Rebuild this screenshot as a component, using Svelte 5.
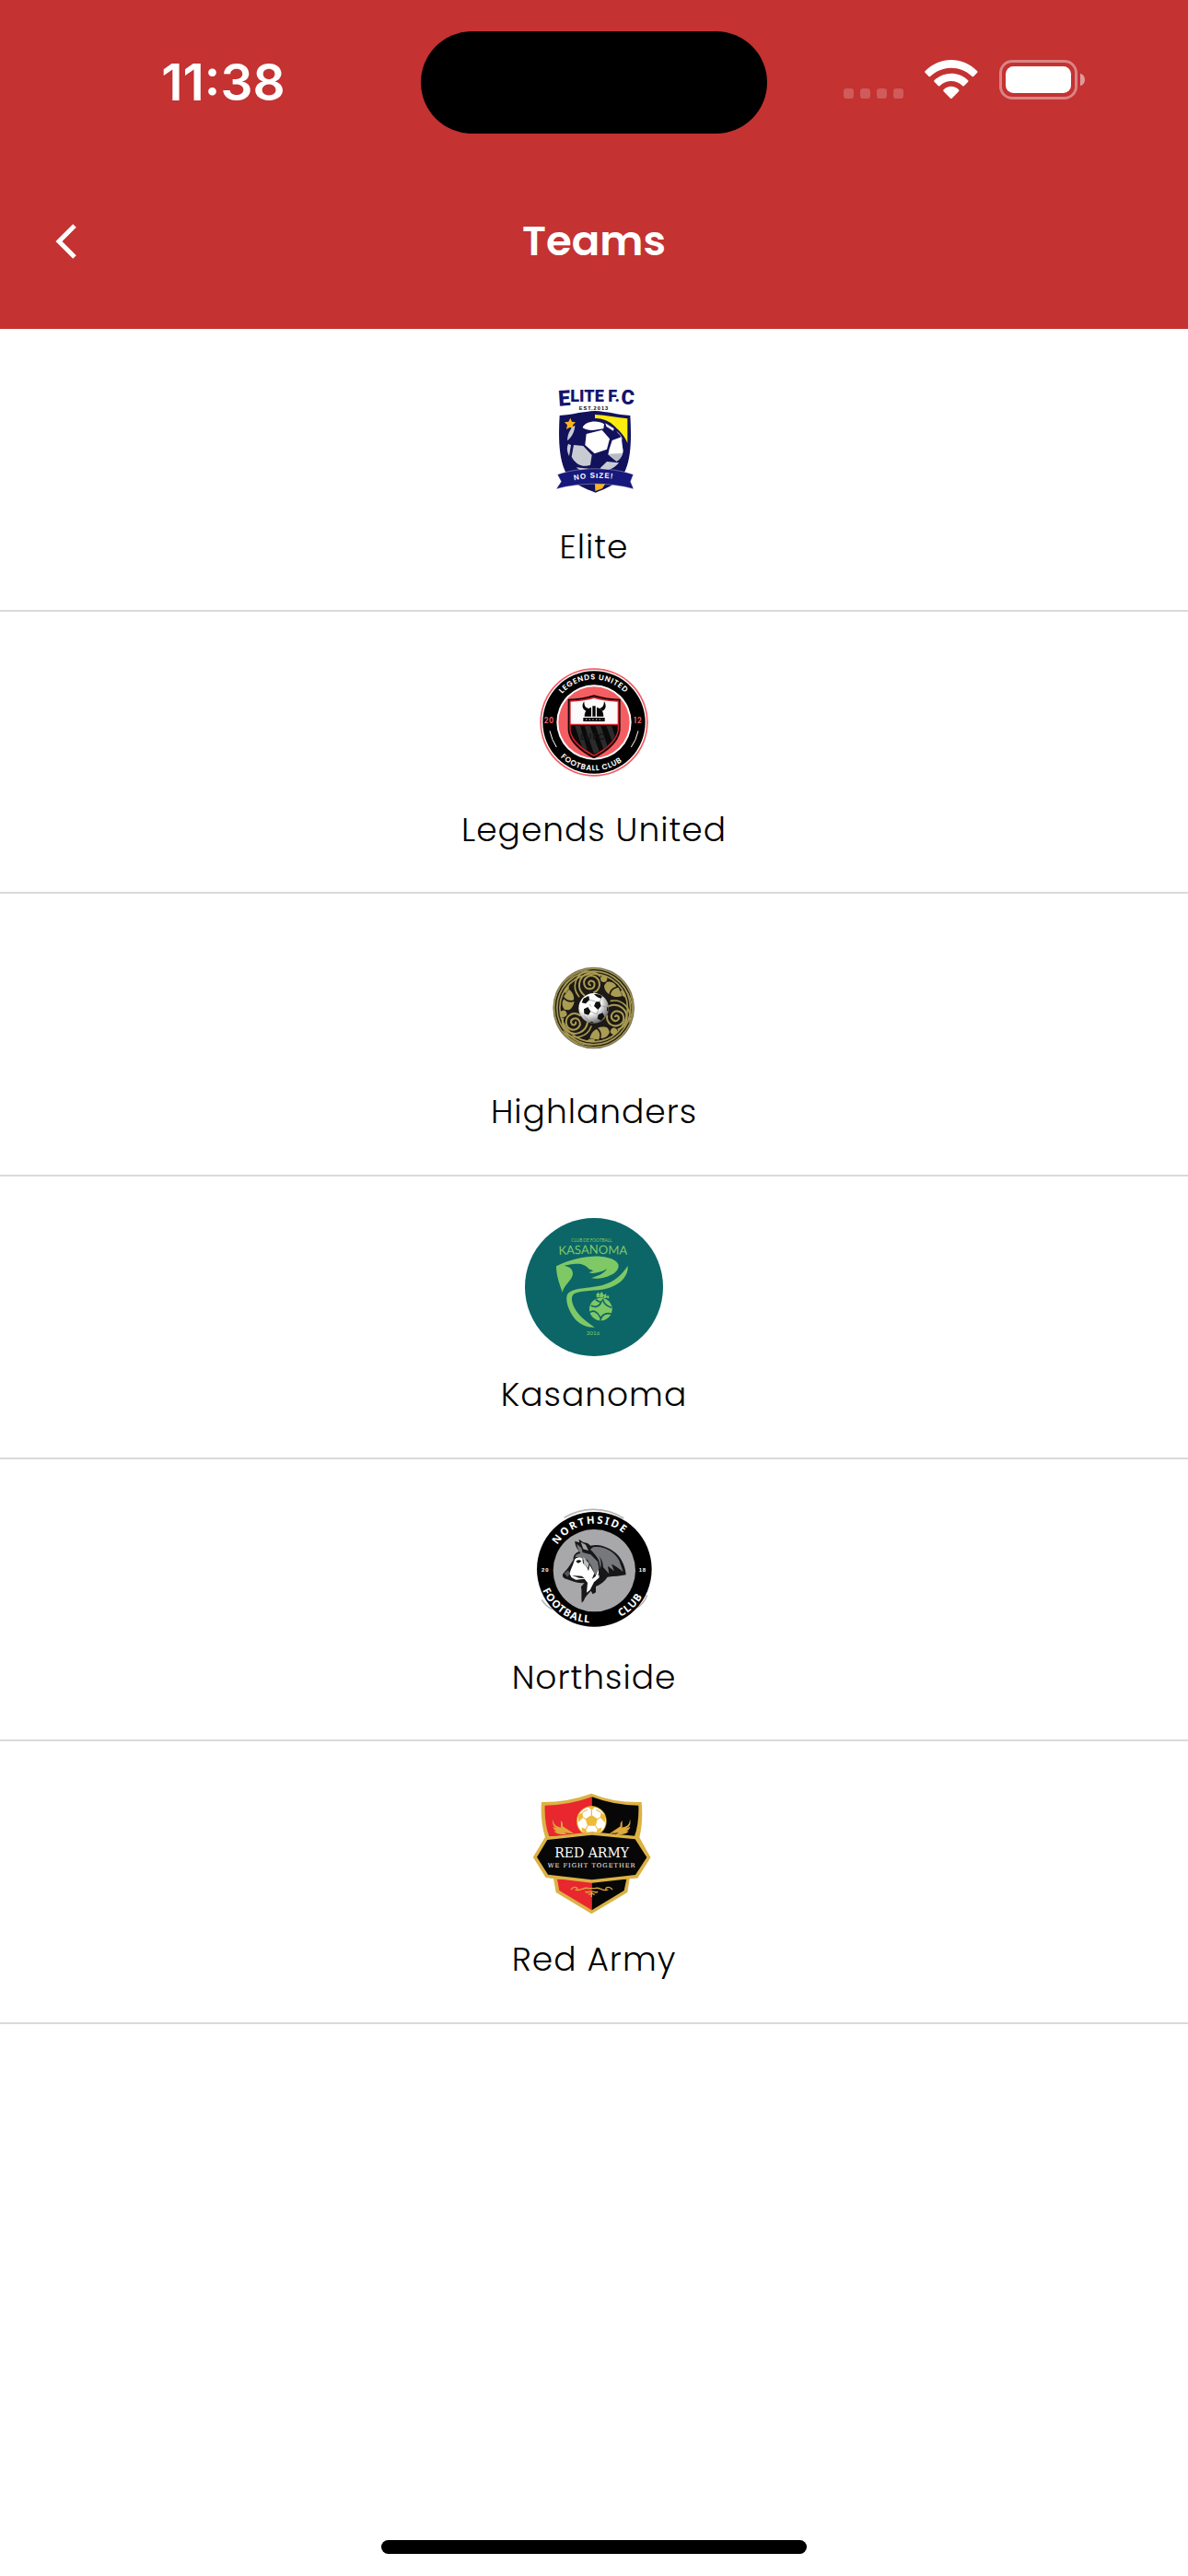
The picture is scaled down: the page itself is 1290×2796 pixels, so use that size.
<script lang="ts">
  const goBack = () => history.back();
</script>

{#snippet eliteCrest()}
  <svg class="crest" viewBox="-30 6 450 450" aria-hidden="true">
    <g class="condensed" fill="#14146e">
      <text x="80" y="122" font-size="70" transform="rotate(-4 80 122)">E</text>
      <text x="118" y="108" font-size="54">LITE F.</text>
      <text x="282" y="115" font-size="66" transform="rotate(4 282 115)">C</text>
    </g>
    <text class="bold" x="146" y="134" font-size="17" letter-spacing="3">EST.2013</text>
    <path d="M83 153C125 150 160 140 198 138C238 140 270 150 313 153C317 220 318 300 290 345C268 378 232 392 200 404C168 392 130 378 107 345C79 300 79 220 83 153Z" fill="#12125c" />
    <path d="M198 150C235 151 270 160 304 163L304 243C288 200 240 168 198 163Z" fill="#fdec0c" />
    <path d="M118 161l5 12 12 2-9 9 2 14-11-7-12 7 3-14-9-9 13-2z" fill="#fbb51c" />
    <circle cx="199" cy="253" r="91" fill="#12125c" />
    <path d="M158 193C163 172 207 165 228 181L226 196C202 199 180 207 158 193Z" fill="#fff" />
    <path d="M170 213L221 200L246 229L237 263L197 277L166 249Z" fill="#fff" />
    <path d="M108 232C110 209 119 193 133 185C132 205 123 222 109 234Z" fill="#c9cbd3" />
    <path d="M129 249L160 252L188 282L183 314C156 325 132 308 122 287Z" fill="#c9cbd3" />
    <path d="M112 245L120 250L114 285C107 271 105 255 112 245Z" fill="#c9cbd3" />
    <path d="M254 234L284 223L290 270C288 283 280 295 268 302L241 280L245 262Z" fill="#fff" />
    <path d="M241 278L288 276C286 288 279 297 269 302Z" fill="#b8bac4" />
    <path d="M232 178L260 195L258 203L235 189Z M268 205C277 209 286 221 289 235L279 216Z" fill="#e8e9ef" />
    <path d="M216 323L237 303L276 307C263 324 244 332 220 334Z M137 322L176 326L181 338C161 337 147 331 137 322Z" fill="#c9cbd3" />
    <path d="M198 371L236 369L222 391L199 399Z" fill="#fbb51c" />
    <path d="M76 345C151 320 248 320 323 345L314 368L324 392C243 370 155 370 72 392L88 368Z" fill="#17187c" stroke="#fff" stroke-width="1" />
    <path id="elite-motto" d="M131 364Q202 348 290 364" fill="none" />
    <text class="bold" font-size="24" fill="#fff" letter-spacing="3"><textPath href="#elite-motto">NO SIZE!</textPath></text>
  </svg>
{/snippet}

{#snippet legendsCrest()}
  <svg class="crest" viewBox="0 -4 450 450" aria-hidden="true">
    <circle cx="225" cy="221" r="176" fill="#f25c63" />
    <circle cx="225" cy="221" r="171" fill="#fff" />
    <circle cx="225" cy="221" r="167" fill="#000" />
    <circle cx="225" cy="221" r="122" fill="#fff" />
    <circle cx="225" cy="221" r="116" fill="#f45d62" />
    <path d="M140 145C170 145 200 140 225 132C252 140 280 145 311 145V246C307 290 260 322 225 339C190 322 143 290 140 246Z" fill="#120506" />
    <path d="M145 150C174 150 202 145 225 138C250 145 277 150 306 150V245C301 286 257 316 225 332C193 316 148 286 145 245Z" fill="#d91f2d" />
    <path d="M149 154C176 154 203 149 225 143C248 149 275 154 302 154V226H149Z" fill="#fafafa" />
    <path d="M149 230H302V246C297 282 255 311 225 327C195 311 153 282 149 246Z" fill="#090909" />
    <path d="M163 232H180L204 314L187 304Z M194 232H212L242 315L225 324Z M229 232H247L269 300L256 309Z M265 232H282L293 266L284 283Z" fill="#2b2b2b" />
    <text class="poppins" x="181" y="279" font-size="30" fill="#151515" letter-spacing="2">LUFC</text>
    <path d="M190 218V206H260V218Z M194 202C194 184 205 175 216 172V202Z M220 202V168H230V202Z M234 202V172C247 175 256 184 256 202Z M199 184C184 178 186 162 193 153C193 167 197 173 207 176Z M252 184C266 178 265 162 258 153C257 167 253 173 243 176Z" fill="#050505" />
    <path d="M198 212H254" stroke="#fff" stroke-width="3" stroke-dasharray="4 7" />
    <path id="legends-top" d="M121 128A139 139 0 0 1 334 135" fill="none" />
    <path id="legends-bottom" d="M116 334A157 157 0 0 0 338 330" fill="none" />
    <g class="poppins" fill="#fff" font-size="25" letter-spacing="2">
      <text><textPath href="#legends-top">LEGENDS UNITED</textPath></text>
      <text><textPath href="#legends-bottom">FOOTBALL CLUB</textPath></text>
    </g>
    <g class="poppins" fill="#f25c63" font-size="24" letter-spacing="2">
      <text x="62" y="224">20</text>
      <text x="355" y="224">12</text>
    </g>
    <path d="M81 249Q87 278 103 302M369 249Q363 278 346 302" fill="none" stroke="#fff" stroke-width="3" />
  </svg>
{/snippet}

{#snippet highlandersMotif()}
  <g fill="none" stroke="#aa9c52" stroke-linecap="round">
    <path d="M183 118C174 115 177 102 188 104C201 107 199 128 184 130C162 132 155 104 172 92C190 80 214 94 213 117C212 130 203 139 195 141" stroke-width="6" />
    <path d="M163 151C138 130 142 91 175 79C190 74 205 79 214 88" stroke-width="6" />
    <path d="M146 155C120 124 136 83 168 73" stroke-width="5" />
    <path d="M92 130C106 95 140 72 178 69" stroke-width="3" />
  </g>
  <circle cx="227" cy="97" r="11" fill="#aa9c52" />
  <path d="M236 108C249 104 264 111 268 123C256 125 246 134 244 148C234 140 228 130 228 119Z M249 149C252 132 266 126 275 126L287 153C274 158 259 157 249 149Z M281 137C290 132 297 143 298 158L289 154Z" fill="#aa9c52" />
{/snippet}

{#snippet highlandersCrest()}
  <svg class="crest" viewBox="-30 -45 450 450" aria-hidden="true">
    <defs>
      <radialGradient id="ball-shade" cx="0.35" cy="0.3" r="0.75">
        <stop offset="0.5" stop-color="#fff" />
        <stop offset="1" stop-color="#666" />
      </radialGradient>
    </defs>
    <circle cx="194" cy="192" r="133" fill="#77745c" />
    <circle cx="194" cy="192" r="130" fill="#a4974f" />
    <g fill="none" stroke="#211d16" stroke-width="4">
      <circle cx="194" cy="192" r="124" />
      <circle cx="194" cy="192" r="115" />
    </g>
    <circle cx="194" cy="192" r="108" fill="#1d1916" />
    <g>{@render highlandersMotif()}</g>
    <g transform="rotate(120 194 192)">{@render highlandersMotif()}</g>
    <g transform="rotate(240 194 192)">{@render highlandersMotif()}</g>
    <circle cx="194" cy="193" r="49" fill="url(#ball-shade)" />
    <path d="M180 166L199 170M172 153L180 165M218 161L214 172M221 186L237 190M208 199L205 212M186 188L180 180M184 204L204 212M164 217L175 232M205 230L193 236" fill="none" stroke="#888" stroke-width="2" />
    <path d="M195 148C206 145 218 150 222 155L217 161L206 157Z M161 161L178 153L180 166L168 178L155 175Z M201 172L214 172L218 186L208 198L195 186Z M162 196L175 189L184 203L177 215L163 211Z M209 214L223 208L229 220L219 233L206 227Z M238 188L242 192L241 204L237 200Z M181 236L190 237L194 241L186 240Z" fill="#111" />
  </svg>
{/snippet}

{#snippet kasanomaCrest()}
  <svg class="crest" viewBox="30 36 450 450" aria-hidden="true">
    <circle cx="255" cy="261" r="225" fill="#0c6667" />
    <g fill="#7fc866">
      <text class="humanist" x="181" y="115" font-size="14">CLUB DE FOOTBALL</text>
      <path id="kasanoma-name" d="M140 156Q252 150 370 156" fill="none" />
      <text class="humanist" font-size="39"><textPath href="#kasanoma-name">KASANOMA</textPath></text>
      <text class="humanist" x="230" y="418" font-size="19">2016</text>
      <path d="M132 193C180 170 230 159 275 161C315 164 337 178 335 194C333 211 312 224 286 230C270 234 258 234 246 232C269 225 289 216 297 202C283 211 266 215 250 216L238 214L253 208L238 202C229 188 209 183 189 186C177 187 168 189 157 191C177 194 186 203 186 218C184 239 159 251 152 278C143 252 132 225 132 193Z" />
      <path d="M365 192C368 224 341 253 300 265C261 276 214 270 190 283C177 293 183 316 196 337C211 360 236 378 257 392C237 394 211 384 194 366C175 343 161 309 167 288C178 260 239 267 285 254C324 243 345 220 365 192Z" />
      <circle cx="277" cy="333" r="37" />
      <path d="M263 283L270 278L273 286L280 276L287 287L295 282L294 290L303 289L304 298L263 294Z" />
    </g>
    <g fill="none" stroke="#0c6667" stroke-width="5" stroke-linecap="round">
      <path d="M247 322C261 329 274 324 280 306M284 302C288 319 299 324 310 327M242 343C252 334 267 342 275 359M276 367C280 350 296 344 311 348M262 303L273 309" />
    </g>
    <g fill="#0c6667">
      <circle cx="273" cy="290" r="2" />
      <circle cx="286" cy="292" r="2" />
      <circle cx="297" cy="295" r="2" />
    </g>
  </svg>
{/snippet}

{#snippet northsideCrest()}
  <svg class="crest" viewBox="0 -4 450 450" aria-hidden="true">
    <path d="M128 51Q175 23 226 24Q278 25 322 53M55 318Q68 340 91 350M398 303Q388 333 362 345" fill="none" stroke="#b8b8b8" stroke-width="5" />
    <circle cx="226" cy="219" r="187" fill="#000" />
    <circle cx="226" cy="223" r="134" fill="#a8a8ab" />
    <path id="north-top" d="M106 140A145 145 0 0 1 345 126" fill="none" />
    <path id="north-foot" d="M57 287A178 178 0 0 0 250 391" fill="none" />
    <path id="north-club" d="M312 374A178 178 0 0 0 396 280" fill="none" />
    <g class="slab" fill="#fff">
      <text font-size="34" letter-spacing="6"><textPath href="#north-top">NORTHSIDE</textPath></text>
      <text font-size="34" letter-spacing="3"><textPath href="#north-foot">FOOTBALL</textPath></text>
      <text font-size="34" letter-spacing="3"><textPath href="#north-club">CLUB</textPath></text>
    </g>
    <g class="bold" fill="#fff" font-size="18">
      <text x="54" y="227" letter-spacing="3">20</text>
      <text x="371" y="227" letter-spacing="2">18</text>
    </g>
    <path d="M176 121L190 131L204 134L214 142C250 132 296 158 310 182C323 202 328 221 329 237C311 241 291 242 269 244C259 259 246 269 231 275L231 294L221 300L215 289C205 300 195 309 192 321L185 328C183 312 186 291 183 276L194 263C178 265 165 261 151 256L136 251C122 247 119 238 127 230L140 215L158 188C156 175 165 165 177 161C167 149 162 135 163 127L177 132Z" fill="#171719" />
    <path d="M169 136L184 150L188 164L214 171L237 194L241 216L229 239L217 210L203 187L183 188C178 181 171 177 164 180C163 173 170 169 181 166C174 157 170 146 169 136Z" fill="#77787b" />
    <path d="M222 147C258 140 294 164 307 190L320 227C306 217 295 207 282 202L291 225L270 208L274 234L253 210L248 231L241 190C233 173 217 159 213 154Z" fill="#77787b" />
    <path d="M161 190C164 179 179 178 187 184L189 199L202 212L207 225L211 205L226 232L218 251L230 242L239 219L242 246L225 261L212 286L201 295L204 263L194 250L166 253L152 246L145 233L150 219C154 210 158 200 161 190Z" fill="#fff" />
    <path d="M128 232L141 222L146 233L139 244Z" fill="#55565a" />
    <path d="M182 130L198 139L207 158L190 153Z" fill="#a2a2a5" />
    <path d="M166 194C170 187 180 187 184 193L174 199ZM153 239L185 241L194 248L177 247ZM241 175C252 194 249 218 237 238L246 235C259 216 257 194 241 175Z" fill="#171719" />
    <path d="M190 178L209 200L206 214L192 202Z" fill="#b9babd" />
  </svg>
{/snippet}

{#snippet redArmyCrest()}
  <svg class="crest" viewBox="0 -14 450 450" aria-hidden="true">
    <path d="M217 21Q293 52 380 49C383 82 383 124 373 164L409 229L367 296L341 298L334 343L217 413L101 343L93 298L68 294L27 228L66 164C54 126 51 84 54 49Q137 50 217 21Z" fill="#dcb244" />
    <path d="M218 300L105 300L112 337L218 401Z M218 32Q142 60 65 60Q63 118 79 160H218Z" fill="#e9272f" />
    <path d="M218 32Q292 60 370 60Q372 118 357 160H218Z M218 300H331L323 337L218 401Z" fill="#070707" />
    <path d="M218 146L366 160L409 229L367 296L218 312L68 294L27 228L66 164Z" fill="#dcb244" />
    <path d="M218 156L359 170L397 229L360 286L218 302L75 285L39 228L73 172Z" fill="#070707" />
    <clipPath id="army-ball">
      <path d="M160 50H280V152L218 146L160 152Z" />
    </clipPath>
    <g clip-path="url(#army-ball)">
      <circle cx="217" cy="111" r="49" fill="#e3ad32" />
      <circle cx="217" cy="111" r="46" fill="#fff" />
      <path d="M217 91L237 104L230 126H204L197 104Z M204 64Q217 61 231 64L217 75Z M174 91L187 83L190 99L173 115Z M248 83L261 93L261 116L245 99Z M184 132L199 136L203 150L187 146Z M236 136L251 132L247 146L232 150Z" fill="#ecbc39" />
      <path d="M217 75V91M197 104L190 99M237 104L245 99M204 126L199 136M230 126L236 136M187 83L204 73M231 73L248 83" fill="none" stroke="#e3ad32" stroke-width="3" />
    </g>
    <path d="M92 104C92 122 100 129 119 132L144 150L125 148C105 147 94 141 91 129L109 137C99 133 86 125 92 104Z M117 109C123 115 124 120 123 128L160 152L137 149L117 130Z M94 144Q113 139 137 154H116Q103 152 94 144Z M342 104C342 122 333 131 314 132L290 151L309 148C328 147 340 141 343 129L326 136C339 131 347 125 342 104Z M317 109C311 115 310 120 311 128L275 152L297 149L317 130Z M339 144Q321 139 296 154H316Q331 152 339 144Z" fill="#dfa93c" />
    <g class="serif" fill="#fff">
      <text x="218" y="228" font-size="42" text-anchor="middle">RED ARMY</text>
      <text x="218" y="263" font-size="20" text-anchor="middle" letter-spacing="3">WE FIGHT TOGETHER</text>
    </g>
    <path d="M150 334C160 320 176 328 169 336M163 334C180 343 191 323 208 330L228 330C243 323 254 343 271 334M285 334C274 320 258 328 265 336M197 340C204 350 213 333 217 343C221 333 230 350 237 340M207 351L217 345L227 351M217 345V358" fill="none" stroke="#dca53b" stroke-width="4" />
  </svg>
{/snippet}

{#snippet team(name, slug, crest)}
  <li class="team">
    <a class="team-link" href={`#${slug}`}>
      {@render crest()}
      <span class="team-name">{name}</span>
    </a>
  </li>
{/snippet}

<div class="screen">
  <header class="header">
    <div class="status">
      <time class="clock">11:38</time>
      <div class="island"></div>
      <div class="indicators">
        <svg width="65" height="43" viewBox="108 75 195 129" aria-label="No signal" role="img">
          <g fill="#fff" opacity="0.2">
            <rect x="108" y="168" width="33" height="33" rx="10" />
            <rect x="162" y="168" width="33" height="33" rx="10" />
            <rect x="216" y="168" width="33" height="33" rx="10" />
            <rect x="270" y="168" width="33" height="33" rx="10" />
          </g>
        </svg>
        <svg width="58" height="43" viewBox="371 75 174 129" aria-label="Wi-Fi" role="img">
          <g fill="#fff">
            <path d="M373 111C420 63 495 63 542 111Q545 114 542 117L531 128Q528 131 525 128C487 92 428 92 390 128Q387 131 384 128L373 117Q370 114 373 111Z" />
            <path d="M403 141C434 112 481 112 512 141Q515 144 512 147L500 159Q497 162 494 159C473 139 442 139 421 159Q418 162 415 159L403 147Q400 144 403 141Z" />
            <path d="M433 172C446 158 469 158 482 172Q485 175 482 178L460 200Q457.500 202 455 200L433 178Q430 175 433 172Z" />
          </g>
        </svg>
        <svg width="93" height="43" viewBox="612 75 279 129" aria-label="Battery full" role="img">
          <rect x="616.500" y="79.500" width="246" height="120" rx="38" fill="none" stroke="#fff" stroke-opacity="0.4" stroke-width="9" />
          <rect x="633" y="96" width="213" height="87" rx="25" fill="#fff" />
          <path d="M876 119C896 124 896 155 876 160Z" fill="#fff" fill-opacity="0.5" />
        </svg>
      </div>
    </div>
    <nav class="navbar">
      <button class="back" type="button" aria-label="Back" onclick={goBack}>
        <svg width="24" height="38" viewBox="0 0 24 38" aria-hidden="true">
          <path d="M21 2L4 19L21 36" fill="none" stroke="#fff" stroke-width="5" />
        </svg>
      </button>
      <h1 class="title">Teams</h1>
    </nav>
  </header>

  <main class="content">
    <ul class="teams">
      {@render team('Elite', 'elite', eliteCrest)}
      {@render team('Legends United', 'legends-united', legendsCrest)}
      {@render team('Highlanders', 'highlanders', highlandersCrest)}
      {@render team('Kasanoma', 'kasanoma', kasanomaCrest)}
      {@render team('Northside', 'northside', northsideCrest)}
      {@render team('Red Army', 'red-army', redArmyCrest)}
    </ul>
  </main>

  <div class="home-indicator"></div>
</div>

<style>
  :global(body) {
    background: #fff;
  }

  .screen {
    display: flex;
    flex-direction: column;
    min-height: 100vh;
    background: #fff;
    font-family: Poppins, Inter, "Liberation Sans", sans-serif;
    color: #000;
  }

  .header {
    padding-top: 34px;
    background: #c43232;
    color: #fff;
  }

  .status {
    display: grid;
    grid-template-columns: 1fr 376px 1fr;
    align-items: center;
  }

  .clock {
    padding: 0 0 2px 28px;
    font: 600 55px/64px Inter, "Liberation Sans", sans-serif;
    text-align: center;
  }

  .island {
    height: 111px;
    border-radius: 56px;
    background: #000;
  }

  .indicators {
    display: flex;
    justify-content: center;
    gap: 23px;
    padding: 0 30px 6px 0;
  }

  .navbar {
    display: grid;
    grid-template-columns: 1fr auto 1fr;
    align-items: center;
    height: 190px;
    margin-top: 22px;
  }

  .back {
    display: flex;
    align-items: center;
    justify-self: start;
    padding: 24px 60px;
    border: 0;
    background: none;
    cursor: pointer;
  }

  .title {
    margin: 0;
    font-size: 45px;
    font-weight: 600;
    line-height: 64px;
  }

  .content {
    flex: 1;
  }

  .teams {
    display: grid;
    grid-auto-rows: 1fr;
    min-height: 1840px;
    margin: 0;
    padding: 0;
    list-style: none;
  }

  .team {
    border-bottom: 2px solid #dadada;
  }

  .team-link {
    display: flex;
    flex-direction: column;
    align-items: center;
    gap: 15px;
    padding-top: 45px;
    color: inherit;
    text-decoration: none;
  }

  .crest {
    display: block;
    width: 150px;
    height: 150px;
  }

  .team-name {
    font-size: 36px;
    font-weight: 300;
    line-height: 54px;
    letter-spacing: 1px;
  }

  .condensed {
    font-family: Roboto, sans-serif;
    font-weight: 900;
  }

  .bold {
    font-family: "Liberation Sans", sans-serif;
    font-weight: 700;
  }

  .poppins {
    font-family: Poppins, Lato, sans-serif;
    font-weight: 600;
  }

  .humanist {
    font-family: Lato, sans-serif;
  }

  .slab {
    font-family: "Noto Sans", sans-serif;
    font-weight: 700;
  }

  .serif {
    font-family: "DejaVu Serif", serif;
  }

  .home-indicator {
    align-self: center;
    width: 462px;
    max-width: 60%;
    height: 15px;
    margin: 24px 0;
    border-radius: 8px;
    background: #000;
  }
</style>
